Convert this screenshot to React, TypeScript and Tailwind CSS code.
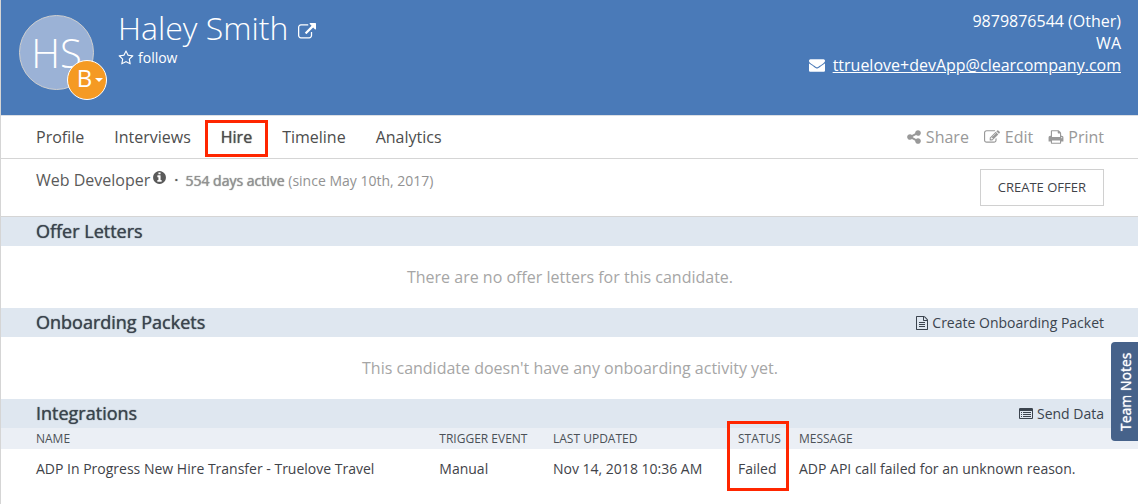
import type { ReactNode } from "react";

const ICONS = {
  external:
    "M1408 928v320q0 119-84.5 203.5t-203.5 84.5h-832q-119 0-203.5-84.5t-84.5-203.5v-832q0-119 84.5-203.5t203.5-84.5h704q14 0 23 9t9 23v64q0 14-9 23t-23 9h-704q-66 0-113 47t-47 113v832q0 66 47 113t113 47h832q66 0 113-47t47-113v-320q0-14 9-23t23-9h64q14 0 23 9t9 23zm384-864v512q0 26-19 45t-45 19-45-19l-176-176-652 652q-10 10-23 10t-23-10l-114-114q-10-10-10-23t10-23l652-652-176-176q-19-19-19-45t19-45 45-19h512q26 0 45 19t19 45z",
  star: "M1201 1004l306-297-422-62-189-382-189 382-422 62 306 297-73 421 378-199 377 199zm527-357q0 22-26 48l-363 354 86 500q1 7 1 20 0 50-41 50-19 0-40-12l-449-236-449 236q-22 12-40 12-21 0-31.5-14.5t-10.5-35.5q0-6 2-20l86-500-364-354q-25-27-25-48 0-37 56-46l502-73 225-455q19-41 49-41t49 41l225 455 502 73q56 9 56 46z",
  envelope:
    "M1792 710v794q0 66-47 113t-113 47h-1472q-66 0-113-47t-47-113v-794q44 49 101 87 362 246 497 345 57 42 92.5 65.5t94.5 48 110 24.5h2q51 0 110-24.5t94.5-48 92.5-65.5q170-123 498-345 57-39 100-87zm0-294q0 79-49 151t-122 123q-376 261-468 325-10 7-42.5 30.5t-54 38-52 32.5-57.5 27-50 9h-2q-23 0-50-9t-57.5-27-52-32.5-54-38-42.5-30.5q-91-64-262-182.5t-205-142.5q-62-42-117-115.5t-55-136.5q0-78 41.5-130t118.5-52h1472q65 0 112.5 47t47.5 113z",
  share:
    "M1344 1024q133 0 226.5 93.5t93.5 226.5-93.5 226.5-226.5 93.5-226.5-93.5-93.5-226.5q0-12 2-34l-360-180q-92 86-218 86-133 0-226.5-93.5t-93.5-226.5 93.5-226.5 226.5-93.5q126 0 218 86l360-180q-2-22-2-34 0-133 93.5-226.5t226.5-93.5 226.5 93.5 93.5 226.5-93.5 226.5-226.5 93.5q-126 0-218-86l-360 180q2 22 2 34t-2 34l360 180q92-86 218-86z",
  edit: "M888 1184l116-116-152-152-116 116v56h96v96h56zm440-720q-16-16-33 1l-350 350q-17 17-1 33t33-1l350-350q17-17 1-33zm80 594v190q0 119-84.5 203.5t-203.5 84.5h-832q-119 0-203.5-84.5t-84.5-203.5v-832q0-119 84.5-203.5t203.5-84.5h832q63 0 117 25 15 7 18 23 3 17-9 29l-49 49q-14 14-32 8-23-6-45-6h-832q-66 0-113 47t-47 113v832q0 66 47 113t113 47h832q66 0 113-47t47-113v-126q0-13 9-22l64-64q15-15 35-7t20 29zm-96-738l288 288-672 672h-288v-288zm444 132l-92 92-288-288 92-92q28-28 68-28t68 28l152 152q28 28 28 68t-28 68z",
  print:
    "M448 1536h896v-256h-896v256zm0-640h896v-384h-160q-40 0-68-28t-28-68v-160h-640v640zm1152 64q0-26-19-45t-45-19-45 19-19 45 19 45 45 19 45-19 19-45zm128 0v416q0 13-9.5 22.5t-22.5 9.5h-224v160q0 40-28 68t-68 28h-960q-40 0-68-28t-28-68v-160h-224q-13 0-22.5-9.5t-9.5-22.5v-416q0-79 56.5-135.5t135.5-56.5h64v-544q0-40 28-68t68-28h672q40 0 88 20t76 48l152 152q28 28 48 76t20 88v256h64q79 0 135.5 56.5t56.5 135.5z",
  info: "M1152 1376v-160q0-14-9-23t-23-9h-96v-512q0-14-9-23t-23-9h-320q-14 0-23 9t-9 23v160q0 14 9 23t23 9h96v320h-96q-14 0-23 9t-9 23v160q0 14 9 23t23 9h448q14 0 23-9t9-23zm-128-896v-160q0-14-9-23t-23-9h-192q-14 0-23 9t-9 23v160q0 14 9 23t23 9h192q14 0 23-9t9-23zm640 416q0 209-103 385.5t-279.5 279.5-385.5 103-385.5-103-279.5-279.5-103-385.5 103-385.5 279.5-279.5 385.5-103 385.5 103 279.5 279.5 103 385.5z",
  file: "M1596 380q28 28 48 76t20 88v1152q0 40-28 68t-68 28h-1344q-40 0-68-28t-28-68v-1600q0-40 28-68t68-28h896q40 0 88 20t76 48zm-444-244v376h376q-10-29-22-41l-313-313q-12-12-41-22zm384 1528v-1024h-416q-40 0-68-28t-28-68v-416h-768v1536h1280zM512 768h768v128h-768zM512 1024h768v128h-768zM512 1280h768v128h-768z",
  list: "M256 640h128v128h-128zM256 896h128v128h-128zM256 1152h128v128h-128zM512 640h1024v128h-1024zM512 896h1024v128h-1024zM512 1152h1024v128h-1024zM1664 1376v-832q0-13-9.5-22.5t-22.5-9.5h-1472q-13 0-22.5 9.5t-9.5 22.5v832q0 13 9.5 22.5t22.5 9.5h1472q13 0 22.5-9.5t9.5-22.5zm128-1088v1088q0 66-47 113t-113 47h-1472q-66 0-113-47t-47-113v-1088q0-66 47-113t113-47h1472q66 0 113 47t47 113z",
};

function Icon({ name, className }: { name: keyof typeof ICONS; className: string }) {
  return (
    <svg viewBox="0 0 1792 1792" fill="currentColor" aria-hidden="true" className={`shrink-0 ${className}`}>
      <path fillRule={name === "list" || name === "file" ? "evenodd" : "nonzero"} d={ICONS[name]} />
    </svg>
  );
}

function SectionBar({ title, children }: { title: string; children?: ReactNode }) {
  return (
    <div className="flex h-[29px] items-center justify-between bg-[#dfe7f0] pr-[34px] pl-[35px] text-[#3b444e]">
      <h2 className="pb-0.5 text-lg leading-6 font-normal [text-shadow:0_0_1px_#3b444e]">{title}</h2>
      {children}
    </div>
  );
}

function EmptyNote({ children }: { children: ReactNode }) {
  return <p className="flex h-[62px] items-center justify-center pl-px text-base text-[#a6a6a6]">{children}</p>;
}

function Tab({ label }: { label: string }) {
  return (
    <a href="#" className="text-[#4d4d4d]">
      {label}
    </a>
  );
}

export default function App() {
  return (
    <div className="relative min-h-screen border-l border-[#d5d5d5] bg-white font-['Open_Sans',sans-serif] text-[#3f4349]">
      <header className="flex h-[116px] justify-between border-b border-[#dcdfe4] bg-[#4a7ab8] pr-[17px] pl-[18px] text-white">
        <div className="flex">
          <div className="relative mt-[15px] mr-6 flex size-[75px] items-center justify-center rounded-full border border-[#cfcfcf] bg-[#9bb2d6] text-[40px] font-light">
            HS
            <button className="absolute top-11 left-[47px] flex size-10 items-center justify-center gap-[3px] rounded-full border border-white bg-[#f59a23] pb-1 pl-1.5 text-2xl font-normal">
              B
              <span className="mt-1 border-x-4 border-t-4 border-x-transparent border-t-white" />
            </button>
          </div>
          <div className="pt-2">
            <h1 className="flex items-center gap-2.5 text-[32px] leading-10 font-light">
              Haley Smith
              <a href="#" aria-label="Open profile">
                <Icon name="external" className="mt-2 size-[18px]" />
              </a>
            </h1>
            <button className="flex items-center gap-1 text-sm leading-5">
              <Icon name="star" className="size-4" />
              follow
            </button>
          </div>
        </div>
        <address className="pt-2.5 text-right text-base leading-[22px] not-italic">
          <p>9879876544 (Other)</p>
          <p>WA</p>
          <p className="flex items-center gap-2">
            <Icon name="envelope" className="size-4" />
            <a href="#" className="underline">
              ttruelove+devApp@clearcompany.com
            </a>
          </p>
        </address>
      </header>

      <nav className="flex h-[43px] items-center justify-between border-b border-[#d5d5d5] pr-[34px] pl-[35px] text-base">
        <div className="flex items-center gap-[30px]">
          <Tab label="Profile" />
          <Tab label="Interviews" />
          <a href="#" aria-current="page" className="relative text-[#4d4d4d] [text-shadow:0_0_1px_#4d4d4d]">
            Hire
            <span className="absolute -inset-x-4 -top-[5px] -bottom-2 border-[3px] border-[#ff2600]" />
          </a>
          <Tab label="Timeline" />
          <Tab label="Analytics" />
        </div>
        <div className="flex items-center gap-[15px] text-[#999]">
          <button className="flex items-center gap-1">
            <Icon name="share" className="size-4" />
            Share
          </button>
          <button className="flex items-center gap-[5px]">
            <Icon name="edit" className="size-4" />
            Edit
          </button>
          <button className="flex items-center gap-1">
            <Icon name="print" className="size-4" />
            Print
          </button>
        </div>
      </nav>

      <div className="flex h-[58px] items-start justify-between border-b border-[#d5d5d5] pt-2.5 pr-[34px] pl-[35px]">
        <p className="flex items-center text-base leading-[22px] text-[#5a5a5a]">
          Web Developer
          <Icon name="info" className="mb-1.5 ml-0.5 size-[15px]" />
          <span className="mx-[7px] [text-shadow:0_0_1px_#5a5a5a]">·</span>
          <span className="pt-px text-sm text-[#929292]">
            <span className="[text-shadow:0_0_1px_#777]">554 days active</span> (since May 10th, 2017)
          </span>
        </p>
        <button className="h-[37px] border border-[#d0d0d0] px-[17px] text-[13px]">CREATE OFFER</button>
      </div>

      <SectionBar title="Offer Letters" />
      <EmptyNote>There are no offer letters for this candidate.</EmptyNote>

      <SectionBar title="Onboarding Packets">
        <button className="flex items-center gap-[3px] text-sm">
          <Icon name="file" className="size-3.5" />
          Create Onboarding Packet
        </button>
      </SectionBar>
      <EmptyNote>This candidate doesn't have any onboarding activity yet.</EmptyNote>

      <SectionBar title="Integrations">
        <button className="flex items-center gap-1 text-sm">
          <Icon name="list" className="size-3.5" />
          Send Data
        </button>
      </SectionBar>
      <table className="w-full table-fixed text-left text-sm">
        <thead className="bg-[#ebeff5] text-xs text-[#4b5157]">
          <tr className="h-[21px]">
            <th className="pl-[35px] font-normal">NAME</th>
            <th className="w-[10%] font-normal">TRIGGER EVENT</th>
            <th className="w-[185px] font-normal">LAST UPDATED</th>
            <th className="relative w-[61px] font-normal">
              STATUS
              <span className="absolute -top-[7px] -left-[11px] h-[70px] w-[62px] border-[3px] border-[#ff2600]" />
            </th>
            <th className="w-[339px] font-normal">MESSAGE</th>
          </tr>
        </thead>
        <tbody>
          <tr className="h-10">
            <td className="pl-[35px]">ADP In Progress New Hire Transfer - Truelove Travel</td>
            <td>Manual</td>
            <td>Nov 14, 2018 10:36 AM</td>
            <td>Failed</td>
            <td>ADP API call failed for an unknown reason.</td>
          </tr>
        </tbody>
      </table>

      <button className="absolute top-[342px] right-0 flex h-[99px] w-[27px] rotate-180 items-center justify-center rounded-r bg-[#46628a] pr-0.5 text-sm text-white [text-shadow:0_0_1px_#fff] [writing-mode:vertical-rl]">
        Team Notes
      </button>
    </div>
  );
}
